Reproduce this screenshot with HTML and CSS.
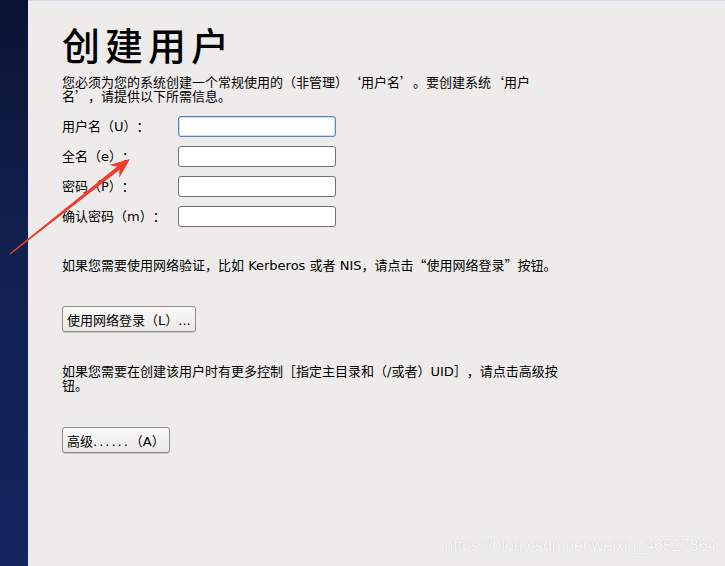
FILE: index.html
```html
<!DOCTYPE html>
<html lang="zh-CN">
<head>
<meta charset="utf-8">
<title>创建用户</title>
<link rel="stylesheet" href="styles.css">
</head>
<body>
<div class="screen">
  <aside class="sidebar"></aside>
  <main class="main">
    <h1 class="title">创建用户</h1>
    <p class="text intro">您必须为您的系统创建一个常规使用的（非管理）<span class="cjk">‘</span>用户名<span class="cjk">’</span>。要创建系统<span class="cjk">‘</span>用户<br>名<span class="cjk">’</span>，请提供以下所需信息。</p>
    <div class="form">
      <label class="label">用户名（U）：</label><input class="field focused" type="text">
      <label class="label">全名（e）：</label><input class="field" type="text">
      <label class="label">密码（P）：</label><input class="field" type="password">
      <label class="label">确认密码（m）：</label><input class="field" type="password">
    </div>
    <p class="text para">如果您需要使用网络验证，比如 Kerberos 或者 NIS，请点击<span class="cjk">“</span>使用网络登录<span class="cjk">”</span>按钮。</p>
    <button class="btn">使用网络登录（L）...</button>
    <p class="text para">如果您需要在创建该用户时有更多控制［指定主目录和（/或者）UID］，请点击高级按<br>钮。</p>
    <button class="btn btn-last">高级<span class="dots">......</span>（A）</button>
  </main>
  <svg class="arrow" width="725" height="566" viewBox="0 0 725 566">
    <polygon points="130,159 119.3,177.7 119.4,169.9 10.4,254.5 9.6,253.5 117,166.7 109.3,165.1" fill="#f23b2b"/>
  </svg>
  <div class="watermark">https://blog.csdn.net/weixin_46527864</div>
</div>
</body>
</html>
```
FILE: styles.css
```css
html, body {
  margin: 0;
  padding: 0;
  height: 100%;
}
body {
  font-family: "DejaVu Sans", "Noto Sans CJK SC", sans-serif;
  color: #000;
  background: #edeceb;
  text-spacing-trim: space-all;
}
.screen {
  position: relative;
  display: flex;
  width: 725px;
  height: 566px;
  overflow: hidden;
}
.sidebar {
  width: 28px;
  flex: none;
  background: linear-gradient(180deg, #0b1333 0%, #12204f 40%, #14245e 100%);
}
.main {
  flex: 1;
  border-top: 1px solid #d6daee;
  padding: 21px 0 0 34px;
  display: flex;
  flex-direction: column;
  align-items: flex-start;
}
.title {
  margin: 0;
  font-family: "Noto Sans CJK SC", sans-serif;
  font-weight: 500;
  font-size: 38px;
  line-height: 44px;
  letter-spacing: 5px;
}
.text {
  margin: 0;
  font-size: 13px;
  line-height: 14px;
}
.cjk {
  font-family: "Noto Sans CJK SC", sans-serif;
  line-height: 0;
}
.intro {
  margin-top: 10px;
}
.form {
  margin-top: 12px;
  display: grid;
  grid-template-columns: 116px 158px;
  row-gap: 9px;
  align-items: center;
}
.label {
  font-size: 13px;
  line-height: 15px;
}
.field {
  box-sizing: border-box;
  width: 158px;
  height: 21px;
  margin: 0;
  border: 1px solid #707070;
  border-radius: 3px;
  background: #fff;
  padding: 0 4px;
  font: inherit;
}
.field.focused {
  border-color: #5b83c2;
  box-shadow: inset 0 0 0 0.5px #9db6de;
}
.para {
  margin-top: 32px;
}
.btn {
  margin-top: 33px;
  box-sizing: border-box;
  height: 26px;
  padding: 0 4px;
  border: 1px solid #8c8c8a;
  border-radius: 3px;
  background: linear-gradient(180deg, #f8f8f7 0%, #ebeae8 100%);
  font-family: "DejaVu Sans", "Noto Sans CJK SC", sans-serif;
  font-size: 13px;
  color: #000;
  box-shadow: 0 1px 0 #c9c8c6;
  text-spacing-trim: space-all;
}
.btn + .para {
  margin-top: 33px;
}
.btn-last {
  margin-top: 34px;
}
.dots {
  letter-spacing: 2px;
}
.arrow {
  position: absolute;
  left: 0;
  top: 0;
  pointer-events: none;
}
.watermark {
  position: absolute;
  right: 9px;
  bottom: 10px;
  font-family: "Liberation Sans", sans-serif;
  font-size: 17px;
  color: rgba(255, 255, 255, 0.9);
  text-shadow: 0 0 1px rgba(170, 170, 170, 0.8);
  transform: scaleX(0.94);
  transform-origin: right bottom;
}
```
